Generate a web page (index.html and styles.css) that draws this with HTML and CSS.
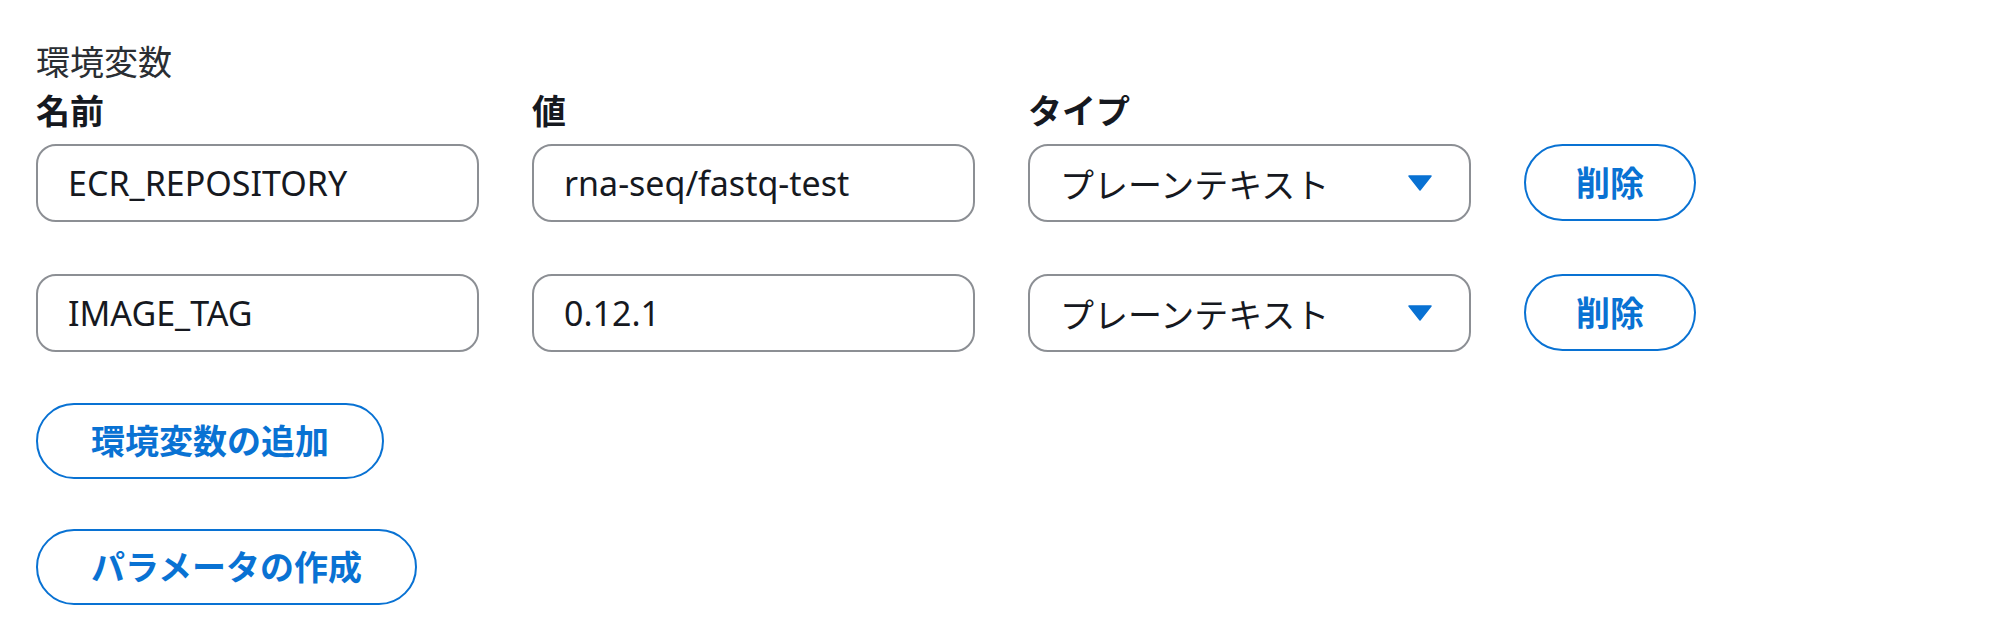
FILE: index.html
```html
<!DOCTYPE html>
<html lang="ja">
<head>
<meta charset="utf-8">
<link rel="stylesheet" href="styles.css">
</head>
<body>
<div class="page">
  <div class="section-title">環境変数</div>
  <div class="env-grid">
    <div class="col-label">名前</div>
    <div class="col-label">値</div>
    <div class="col-label">タイプ</div>
    <div></div>

    <div class="field">ECR_REPOSITORY</div>
    <div class="field">rna-seq/fastq-test</div>
    <div class="field select"><span>プレーンテキスト</span><svg class="caret" width="24" height="16" viewBox="0 0 24 16"><path d="M1 1 H23 L12 15 Z" fill="#0972d3" stroke="#0972d3" stroke-width="1.5" stroke-linejoin="round"/></svg></div>
    <div class="btn-cell"><button class="btn small">削除</button></div>

    <div class="field row2">IMAGE_TAG</div>
    <div class="field row2">0.12.1</div>
    <div class="field select row2"><span>プレーンテキスト</span><svg class="caret" width="24" height="16" viewBox="0 0 24 16"><path d="M1 1 H23 L12 15 Z" fill="#0972d3" stroke="#0972d3" stroke-width="1.5" stroke-linejoin="round"/></svg></div>
    <div class="btn-cell row2"><button class="btn small">削除</button></div>
  </div>
  <div class="actions">
    <button class="btn">環境変数の追加</button>
    <button class="btn">パラメータの作成</button>
  </div>
</div>
</body>
</html>
```
FILE: styles.css
```css
* { box-sizing: border-box; }
html, body { margin: 0; padding: 0; background: #ffffff; }
body {
  font-family: "Noto Sans", "Noto Sans CJK JP", sans-serif;
  color: #16191f;
  font-size: 34px;
}
.page {
  padding: 36px 0 0 36px;
}
.section-title {
  font-size: 34px;
  line-height: 52px;
  color: #2a2e33;
}
.env-grid {
  display: grid;
  grid-template-columns: 443px 443px 443px auto;
  grid-template-rows: 56px 78px 130px;
  column-gap: 53px;
  align-items: start;
}
.row2 { margin-top: 52px; }
.col-label {
  font-weight: 700;
  line-height: 46px;
  font-size: 34px;
}
.field {
  height: 78px;
  border: 2px solid #8c8f94;
  border-radius: 20px;
  padding: 0 30px;
  display: flex;
  align-items: center;
  font-size: 34px;
  color: #16191f;
  white-space: nowrap;
}
.select {
  justify-content: space-between;
  padding-right: 37px;
}
.caret { display: block; }
.btn-cell { display: flex; }
.btn {
  font-family: "Noto Sans", "Noto Sans CJK JP", sans-serif;
  font-size: 34px;
  font-weight: 700;
  color: #0972d3;
  background: #ffffff;
  border: 2.5px solid #0972d3;
  border-radius: 40px;
  height: 76px;
  padding: 0 53px;
  line-height: 1;
  display: flex;
  align-items: center;
}
.btn.small { padding: 0 50px; height: 77px; }
.actions {
  display: flex;
  flex-direction: column;
  align-items: flex-start;
  gap: 50px;
  margin-top: 51px;
}
```
